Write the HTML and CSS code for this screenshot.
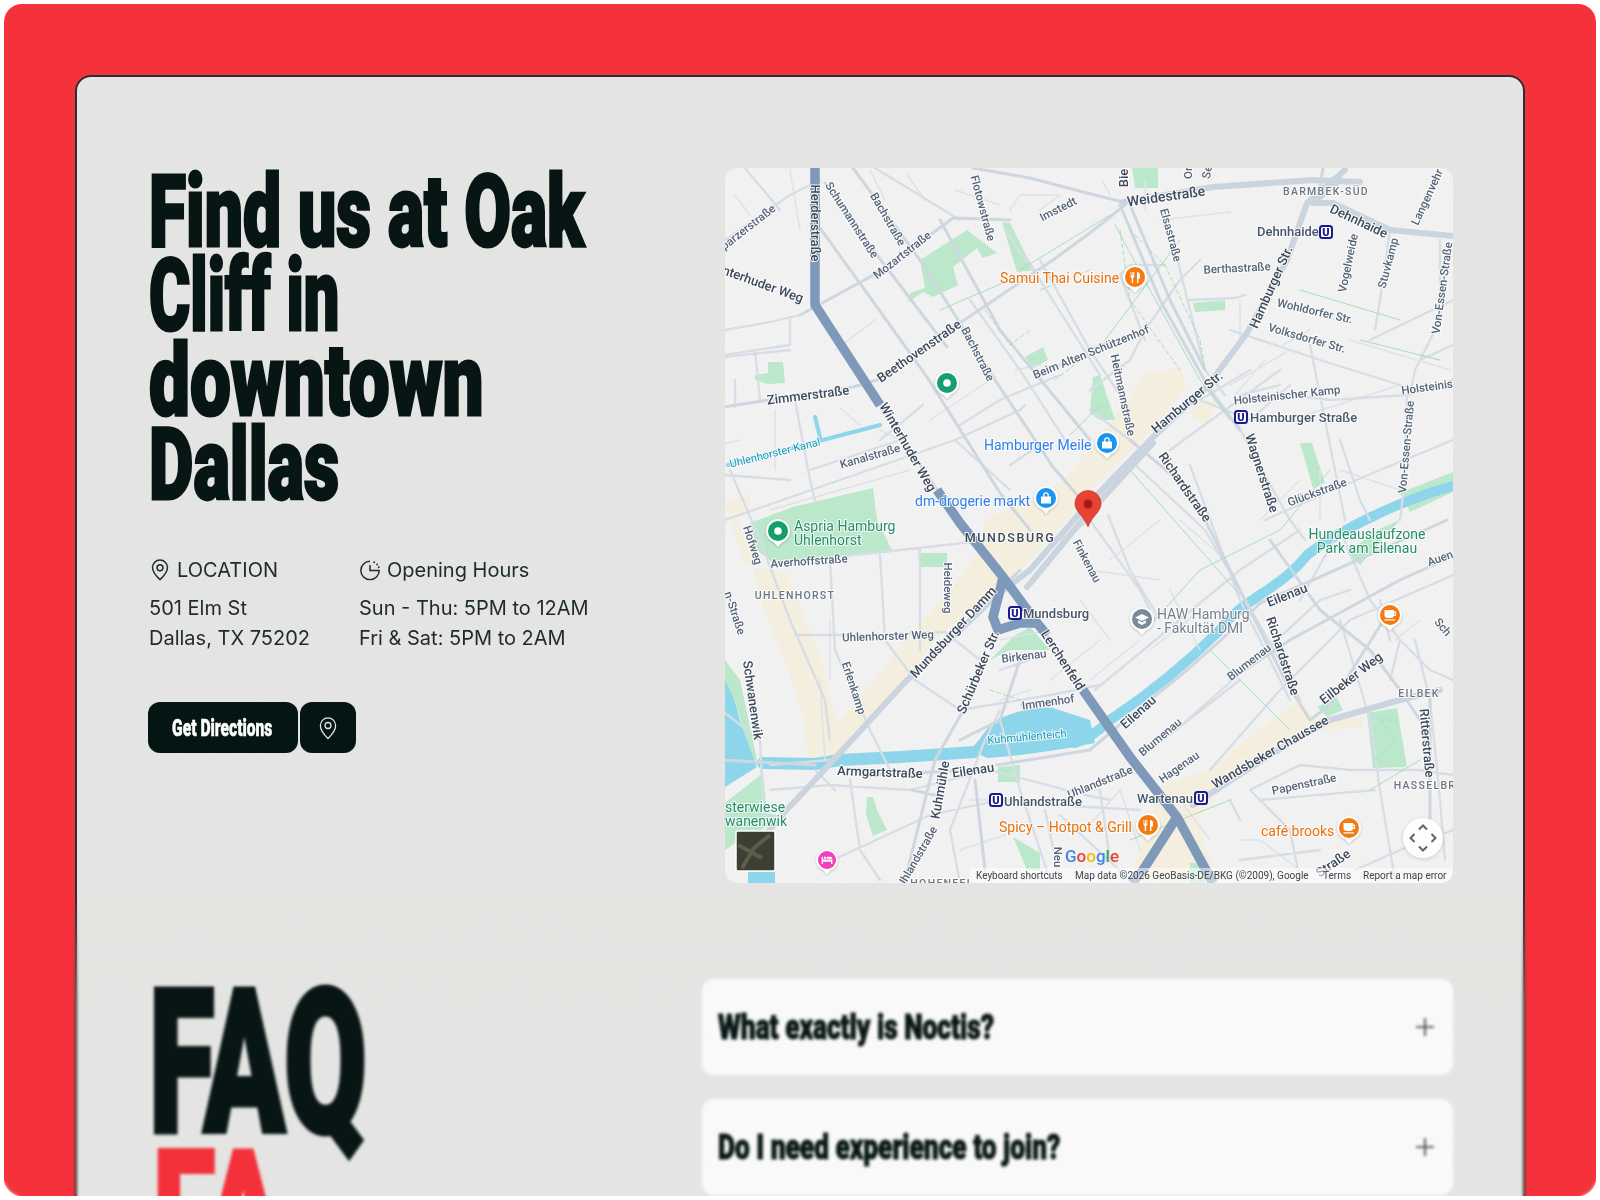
FILE: index.html
```html
<!DOCTYPE html>
<html lang="en">
<head>
  <meta charset="UTF-8" />
  <meta name="viewport" content="width=device-width, initial-scale=1.0" />
  <title>Noctis - Find us</title>
  <link rel="stylesheet" href="styles.css">
</head>
<body>
  <div class="frame">
    <main class="panel">
      <section class="hero">
        <div class="hero-info">
          <h1 class="hero-title">
            <span class="line-1">Find us at Oak</span>
            <span class="line-2">Cliff in</span>
            <span class="line-3">downtown</span>
            <span class="line-4">Dallas</span>
          </h1>
          <div class="info-row">
            <div class="info-col">
              <div class="info-label">
                <svg class="info-icon" viewBox="0 0 24 24"><path d="M12 22.5s8.2-7.4 8.2-13.2A8.2 8.2 0 0 0 3.800 9.300C3.800 15.100 12 22.500 12 22.500z"/><circle cx="12" cy="9.500" r="3.200"/></svg>
                LOCATION
              </div>
              <p>501 Elm St</p>
              <p>Dallas, TX 75202</p>
            </div>
            <div class="info-col">
              <div class="info-label">
                <svg class="info-icon" viewBox="0 0 24 24"><path d="M12 2.500A10 10 0 1 0 22 12.500H12V6.500"/><path d="M16.500 3.500l.01 0M19.700 6l.01 0M21.500 9l.01 0" stroke-linecap="round" stroke-width="2"/></svg>
                Opening Hours
              </div>
              <p>Sun - Thu: 5PM to 12AM</p>
              <p>Fri &amp; Sat: 5PM to 2AM</p>
            </div>
          </div>
          <div class="btn-row">
            <a class="btn btn-text" href="#"><span>Get Directions</span></a>
            <a class="btn btn-icon" href="#">
              <svg viewBox="0 0 24 24"><path d="M12 22.500s7.600-7.200 7.600-13A7.600 7.600 0 0 0 4.400 9.500c0 5.800 7.600 13 7.600 13z"/><circle cx="12" cy="9.500" r="3"/></svg>
            </a>
          </div>
        </div>

        <div class="map">
          <svg class="map-svg" viewBox="725 168 728 715">
            <defs>
              <g id="pin">
                <path class="pin-tail" d="M-7 8 L0 16 L7 8z"/>
                <circle class="pin-edge" r="12"/>
                <circle class="pin-fill" r="10"/>
              </g>
            </defs>
            <rect x="725" y="168" width="728" height="715" fill="#f3f3f4"/>

            <!-- beige districts -->
            <path class="beige" d="M985 520L1020 500 1050 495 1090 450 1147 373 1180 368 1187 387 1153 430 1090 490 1040 550 1000 590 970 610 935 640 950 590 980 550z"/>
            <path class="beige" d="M1193 403L1217 400 1208 425 1192 417z"/>
            <path class="beige" d="M985 570L955 610 920 660 880 710 840 760 810 770 807 750 835 725 875 680 905 640 950 590z"/>
            <path class="beige" d="M753 567L787 573 800 607 820 653 837 727 830 753 807 750 803 717 787 667 763 607z"/>
            <path class="beige" d="M725 503L750 493 750 510 737 520 757 565 745 565z"/>
            <path class="beige" d="M1130 883L1160 787 1213 767 1257 730 1300 700 1313 717 1363 717 1363 728 1313 730 1253 757 1213 800 1197 820 1217 883z"/>

            <!-- parks -->
            <path class="park" d="M920 260L967 230 997 253 983 258 977 248 953 267 958 285 933 297 923 292 908 302 910 293 925 288z"/>
            <path class="park" d="M1002 222L1010 223 1027 257 1035 270 1017 272z"/>
            <path class="park" d="M755 375L768 373 768 362 783 362 785 383 768 384 755 380z"/>
            <path class="park" d="M1025 357L1043 347 1048 360 1033 368z"/>
            <path class="park" d="M750 523L793 507 873 488 877 520 893 552 773 563 757 550z"/>
            <path class="park" d="M1132 168L1158 168 1158 188 1135 188z"/>
            <path class="park" d="M1193 303L1225 300 1225 310 1195 312z"/>
            <path class="park" d="M1300 443L1312 443 1325 483 1313 488z"/>
            <path class="park" d="M1090 413L1093 377 1100 375 1115 420 1100 420z"/>
            <path class="park" d="M918 553L947 553 947 567 920 567z"/>
            <path class="park" d="M990 660L1013 637 1030 627 1050 650 1010 650z"/>
            <path class="park" d="M725 660L740 680 757 760 750 760 737 707 725 680z"/>
            <path class="park" d="M725 803L763 773 767 813 787 817 740 840 725 850z"/>
            <path class="park" d="M867 797L873 797 877 810 887 830 873 836 866 815z"/>
            <path class="park" d="M998 767L1020 765 1020 782 998 782z"/>
            <path class="park" d="M1367 713L1397 708 1407 767 1373 768z"/>
            <path class="park" d="M1317 707L1337 698 1343 710 1327 717z"/>
            <path class="park" d="M1347 553L1377 530 1400 520 1360 565z"/>
            <path class="park" d="M1190 863L1205 863 1205 883 1190 883z"/>
            <path class="park" d="M1013 837L1040 853 1040 870 1027 870z"/>
            <path class="park" d="M1400 493L1453 472 1453 492 1410 512z"/>

            <!-- water -->
            <path class="water-line" stroke-width="10" d="M1453 486C1400 500 1340 530 1307 555 1280 590 1240 600 1220 630 1180 670 1140 700 1110 720 1095 735 1085 740 1075 743"/>
            <path class="water" d="M970 750C985 735 990 720 1003 717 1020 710 1040 706 1053 708L1090 720 1095 743C1060 750 1020 756 987 758z"/>
            <path class="water-line" stroke-width="12" d="M975 752L900 757 840 760 815 764 763 763"/>
            <path class="water" d="M725 680C735 700 738 710 740 722L757 767 725 787z"/>
            <path class="water" d="M748 872L775 872 775 883 748 883z"/>
            <path class="water-line" stroke-width="4" d="M728 465L880 425M815 417L820 437"/>

            <!-- thin paths -->
            <path class="road-thin" d="M800 230L790 170M735 195L750 215M870 170L885 200M907 175L925 200M955 190L1000 205M1010 210L1020 195 1060 195M1060 195L1040 210M875 320L835 350M1015 370L1040 365M775 410V470M740 440L720 445M770 510L910 470M930 420L990 380M840 408L860 425M880 430L900 440M1102 180L1110 195M1145 180V210M1160 220L1230 212M1240 300L1240 340M1265 360L1235 395M1230 385L1290 350M1283 345L1310 330M1350 340L1450 370M1320 470V520M1420 355L1440 360M1290 420L1400 385M1080 600L1110 640M1090 570L1160 580M1170 590L1200 650M1110 560L1160 520M1180 520L1220 555M1090 680L1140 640M1150 650L1200 610M820 680L825 760M830 620V680M1000 640L1050 630M1050 680L1100 640M1000 700L1030 690M1085 830L1120 790M1120 790L1140 850M970 800L1010 800M960 850L1020 830M1240 840H1260L1300 870M1060 790H1100M1180 800L1210 840M1395 640L1420 620M1260 520L1300 480M1340 470L1400 490"/>

            <!-- minor roads -->
            <path class="road-minor" d="M725 240L790 195 820 180M745 168L780 210M724 330L770 322 800 315M724 355L790 345 790 320M724 357L790 350M755 350L760 400M795 400L810 480 815 500M725 475L790 480M735 380V407M810 470L900 440M725 520L840 480 955 440 1020 410 1025 405M923 405L880 440M955 440L1010 490M870 165L960 220M1040 260L1090 350 1130 410M1005 230L1040 280 1100 375M970 300L1020 370 1065 440M1090 390L1130 360 1145 330M1040 375L1100 345 1145 330 1180 280 1200 260M1040 445L1010 465M1090 410L1130 440M1060 375L1000 400 960 425M1190 300L1235 298 1245 295M1175 250L1190 310 1205 370 1225 395M1230 330L1320 360 1400 385 1415 390M1390 230L1380 300 1375 330M1370 340L1453 300M1440 240L1440 320 1415 370 1410 395M1407 395L1405 480 1400 520M1165 265H1130L1120 275 1145 340M1285 395L1330 400 1407 395 1453 380M1240 395L1280 385M1235 420L1262 470 1290 520 1305 540M1265 520L1310 500 1380 470 1453 440M1340 440L1360 500 1370 520M1310 345L1325 420 1345 520M1190 465L1240 600 1290 700M1130 460L1205 530 1240 590 1285 670 1300 700M1090 520L1060 540M1090 520L1140 590 1155 620M1108 515L1130 570 1160 620M730 470L760 540 790 620 825 700 830 740M780 563L900 550 990 540M830 560L835 650 870 730 890 770M880 555L885 640 915 680 960 710M920 550L920 650M795 635L870 635 945 632 980 660M960 710L1050 695 1100 685M1000 710L985 740 950 830 960 883M1000 720L1020 790 1050 880M850 780L860 850 880 880M770 790L830 785 910 790 990 770 1085 795 1110 800M833 860L930 815 1000 800 1055 805 1140 810M1045 810L1060 880M1100 790L1110 860M1060 815L1130 880M1000 670L1030 660M1095 690L1240 570 1300 530M1170 735L1250 665 1320 600 1350 590M1210 770L1280 690 1350 620 1453 575M1150 750L1240 680M1300 600L1340 530 1370 600 1400 640 1430 670 1453 680M1380 600L1390 640M1340 620L1370 720 1380 790 1395 880M1250 790L1290 830 1300 880M1230 800L1240 820M1250 790L1300 765 1350 770 1420 770 1453 775M1260 800L1375 790M1415 640L1430 700 1440 800 1445 860M1390 680L1400 640M1240 860L1320 850M1355 870L1400 850 1453 830M725 713L760 740 763 800 770 830M770 765L830 760M815 770L835 790M1420 360L1453 345M1250 370L1200 400 1250 420 1290 385M1170 450L1280 370"/>

            <!-- medium roads -->
            <path class="road" d="M724 407L853 387 877 380 960 323 1053 260 1090 233 1125 205M973 168L1030 178 1087 193 1123 202M1323 168L1318 200M800 315L870 277 930 235 953 218 1010 220M820 228L877 307 927 377 1000 493 1030 530M853 168L920 260 960 323 997 383 1053 467 1090 510M825 183L877 255 947 347M940 220L1000 330 1090 440M1020 570L1000 590M1120 205L1160 300 1210 390 1240 430M1130 205L1170 300 1205 370M1130 440L1190 490 1245 600 1285 680 1310 720M1310 720L1330 705 1390 610M1270 540L1320 610 1370 650 1400 690 1420 720M1445 560L1400 580 1290 640 1230 680M1430 695L1430 840M860 775L980 770M720 760L815 765M975 690L935 760 905 880M912 790L935 795M975 780L985 870M1020 660L1000 720 960 740M997 765L1090 750 1117 727 1187 670 1247 617 1260 603 1313 580 1380 550 1447 520"/>

            <!-- arterial roads -->
            <path class="road-wide" d="M1345 170L1307 203 1287 260 1247 333 1207 387 1153 437 1087 505 1030 570 997 595 907 680 827 767 780 817 745 860"/>
            <path class="road-wide" stroke-width="4" d="M1153 443L1080 523 1027 587"/>
            <path class="road-wide" stroke-width="6" d="M1123 202L1213 187 1313 180 1360 182M1313 203L1333 203 1390 230 1453 236M1313 203L1340 180"/>
            <path class="road-wide" stroke-width="8" d="M1193 805L1270 755 1330 720 1400 700 1440 690"/>
            <path class="road-green" d="M1020 270L1110 215M1115 225L1150 290 1200 380 1230 420M1105 340L1150 280 1180 240M1130 470L1240 595M940 310L1010 280M1100 405L1070 435M1300 290L1400 320M1360 340L1440 360M1150 625L1200 570 1280 530 1330 470M1210 650L1290 730M1130 840L1230 800M1370 790L1420 760"/>
            <path class="road-dash" d="M985 310L1010 345 1030 330M1130 230L1165 265 1200 340 1205 370M1040 290L1090 270M1055 380L1100 345M1120 230L1130 300 1180 370M990 690L1020 700 1030 740M1380 720L1395 740 1375 760M1380 720H1400"/>

            <!-- dark highway -->
            <path class="road" d="M880 405L937 490M1047 635L1083 690"/>
            <path class="road-dark" d="M815 165V305L880 405M937 490L960 523 1003 577 1037 623 1047 635"/>
            <path class="road-dark" stroke-width="7" d="M1083 690L1130 757 1177 817 1213 883"/>
            <path class="road-dark" stroke-width="7" d="M1177 817L1143 870 1132 883"/>
            <path class="road-dark" stroke-width="5" d="M1003 577L1000 590 993 617 998 630 1020 623 1037 623"/>

            <!-- road labels -->
            <g class="lb">
              <text transform="translate(748 227) rotate(-38)">parzerstraße</text>
              <text class="lb-md" transform="translate(815 223) rotate(90)">Herderstraße</text>
              <text transform="translate(852 220) rotate(57)">Schumannstraße</text>
              <text transform="translate(888 219) rotate(60)">Bachstraße</text>
              <text transform="translate(902 255) rotate(-38)">Mozartstraße</text>
              <text transform="translate(983 208) rotate(75)">Flotowstraße</text>
              <text transform="translate(1058 209) rotate(-27)">Imstedt</text>
              <text class="lb-md" transform="translate(763 284) rotate(20)">nterhuder Weg</text>
              <text class="lb-md" transform="translate(919 351) rotate(-35)">Beethovenstraße</text>
              <text transform="translate(978 354) rotate(63)">Bachstraße</text>
              <text transform="translate(1091 352) rotate(-22)">Beim Alten Schützenhof</text>
              <text class="lb-md" transform="translate(808 395) rotate(-7)">Zimmerstraße</text>
              <text class="lb-md" transform="translate(908 447) rotate(60)">Winterhuder Weg</text>
              <text transform="translate(870 456) rotate(-16)">Kanalstraße</text>
              <text transform="translate(753 545) rotate(72)">Hofweg</text>
              <text transform="translate(809 561) rotate(-4)">Averhoffstraße</text>
              <text transform="translate(948 588) rotate(90)">Heideweg</text>
              <text transform="translate(735 613) rotate(72)">n-Straße</text>
              <text class="lb-md" transform="translate(753 700) rotate(82)">Schwanenwik</text>
              <text transform="translate(888 636) rotate(-2)">Uhlenhorster Weg</text>
              <text class="lb-md" transform="translate(953 632) rotate(-47)">Mundsburger Damm</text>
              <text transform="translate(854 688) rotate(72)">Erlenkamp</text>
              <text class="lb-md" transform="translate(978 672) rotate(-67)">Schürbeker Str.</text>
              <text transform="translate(1024 656) rotate(-7)">Birkenau</text>
              <text class="lb-md" transform="translate(1063 660) rotate(57)">Lerchenfeld</text>
              <text transform="translate(1048 702) rotate(-8)">Immenhof</text>
              <text class="lb-md" transform="translate(880 772) rotate(2)">Armgartstraße</text>
              <text class="lb-md" transform="translate(973 770) rotate(-8)">Eilenau</text>
              <text class="lb-md" transform="translate(940 790) rotate(-80)">Kuhmühle</text>
              <text transform="translate(1100 782) rotate(-22)">Uhlandstraße</text>
              <text transform="translate(917 857) rotate(-60)">Uhlandstraße</text>
              <text transform="translate(1058 857) rotate(90)">Neu</text>
              <text class="lb-md" transform="translate(1123 178) rotate(-90)">Bie</text>
              <text transform="translate(1188 173) rotate(-90)">Or</text>
              <text transform="translate(1207 172) rotate(-80)">Se</text>
              <text class="lb-lg" transform="translate(1166 196) rotate(-8)">Weidestraße</text>
              <text class="lb-md" transform="translate(1359 221) rotate(25)">Dehnhaide</text>
              <text transform="translate(1171 235) rotate(75)">Elsastraße</text>
              <text transform="translate(1348 263) rotate(-78)">Vogelweide</text>
              <text transform="translate(1427 197) rotate(-65)">Langenvehr</text>
              <text transform="translate(1388 263) rotate(-75)">Stuvkamp</text>
              <text transform="translate(1237 268) rotate(-3)">Berthastraße</text>
              <text class="lb-md" transform="translate(1271 287) rotate(-66)">Hamburger Str.</text>
              <text transform="translate(1442 288) rotate(-82)">Von-Essen-Straße</text>
              <text transform="translate(1315 311) rotate(13)">Wohldorfer Str.</text>
              <text transform="translate(1307 338) rotate(16)">Volksdorfer Str.</text>
              <text transform="translate(1123 395) rotate(78)">Heitmannstraße</text>
              <text class="lb-md" transform="translate(1187 402) rotate(-40)">Hamburger Str.</text>
              <text transform="translate(1287 395) rotate(-6)">Holsteinischer Kamp</text>
              <text transform="translate(1427 387) rotate(-8)">Holsteinis</text>
              <text transform="translate(1406 447) rotate(-85)">Von-Essen-Straße</text>
              <text class="lb-md" transform="translate(1262 473) rotate(72)">Wagnerstraße</text>
              <text class="lb-md" transform="translate(1185 487) rotate(55)">Richardstraße</text>
              <text transform="translate(1317 492) rotate(-20)">Glückstraße</text>
              <text transform="translate(1440 558) rotate(-20)">Auen</text>
              <text transform="translate(1087 561) rotate(62)">Finkenau</text>
              <text class="lb-md" transform="translate(1287 595) rotate(-22)">Eilenau</text>
              <text transform="translate(1443 627) rotate(50)">Sch</text>
              <text class="lb-md" transform="translate(1283 656) rotate(72)">Richardstraße</text>
              <text transform="translate(1249 662) rotate(-38)">Blumenau</text>
              <text transform="translate(1160 737) rotate(-40)">Blumenau</text>
              <text class="lb-md" transform="translate(1138 712) rotate(-42)">Eilenau</text>
              <text class="lb-md" transform="translate(1351 678) rotate(-38)">Eilbeker Weg</text>
              <text class="lb-md" transform="translate(1270 752) rotate(-30)">Wandsbeker Chaussee</text>
              <text transform="translate(1179 767) rotate(-35)">Hagenau</text>
              <text transform="translate(1304 784) rotate(-12)">Papenstraße</text>
              <text class="lb-md" transform="translate(1427 743) rotate(85)">Ritterstraße</text>
              <text class="lb-md" transform="translate(1333 863) rotate(-35)">Straße</text>
            </g>

            <!-- water labels -->
            <g class="lb-water">
              <text transform="translate(775 453) rotate(-14)">Uhlenhorster Kanal</text>
              <text transform="translate(1027 737) rotate(-5)">Kuhmühlenteich</text>
            </g>

            <!-- district labels -->
            <g class="lb-district">
              <text class="dark" x="1010" y="542">MUNDSBURG</text>
              <text x="795" y="599">UHLENHORST</text>
              <text x="1326" y="195">BARMBEK-SÜD</text>
              <text x="1419" y="697">EILBEK</text>
              <text x="1425" y="789">HASSELBR</text>
              <text x="942" y="887">HOHENFEL</text>
            </g>

            <!-- place labels -->
            <g class="lb-place">
              <text class="orange" x="1000" y="283">Samui Thai Cuisine</text>
              <text class="blue" x="984" y="450">Hamburger Meile</text>
              <text class="blue" x="915" y="506">dm-drogerie markt</text>
              <text class="green" x="794" y="531">Aspria Hamburg</text>
              <text class="green" x="794" y="545">Uhlenhorst</text>
              <text class="green" x="725" y="812">sterwiese</text>
              <text class="green" x="725" y="826">wanenwik</text>
              <text class="green mid" x="1367" y="539">Hundeauslaufzone</text>
              <text class="green mid" x="1367" y="553">Park am Eilenau</text>
              <text class="gray" x="1157" y="619">HAW Hamburg</text>
              <text class="gray" x="1157" y="633">- Fakultät DMI</text>
              <text class="orange" x="999" y="832">Spicy – Hotpot &amp; Grill</text>
              <text class="orange" x="1261" y="836">café brooks</text>
              <text class="station" x="1257" y="236">Dehnhaide</text>
              <text class="station" x="1250" y="422">Hamburger Straße</text>
              <text class="station" x="1023" y="618">Mundsburg</text>
              <text class="station" x="1004" y="806">Uhlandstraße</text>
              <text class="station" x="1137" y="803">Wartenau</text>
            </g>

            <!-- subway badges -->
            <g class="ubahn">
              <g transform="translate(1326 232)"><rect x="-6" y="-6" width="12" height="12" rx="2.500"/><text y="4">U</text></g>
              <g transform="translate(1241 417)"><rect x="-6" y="-6" width="12" height="12" rx="2.500"/><text y="4">U</text></g>
              <g transform="translate(1015 613)"><rect x="-6" y="-6" width="12" height="12" rx="2.500"/><text y="4">U</text></g>
              <g transform="translate(996 800)"><rect x="-6" y="-6" width="12" height="12" rx="2.500"/><text y="4">U</text></g>
              <g transform="translate(1201 798)"><rect x="-6" y="-6" width="12" height="12" rx="2.500"/><text y="4">U</text></g>
            </g>

            <!-- place pins -->
            <g class="pin pin-orange" transform="translate(1135 277)"><use href="#pin"/><path class="glyph" d="M-4.500 -5v4.500a1.500 1.500 0 0 0 1.200 1.400V6h1.400V.9a1.500 1.500 0 0 0 1.200-1.400V-5h-1v3.500h-.6V-5h-1v3.500h-.6V-5zM2 -5v11h1.400V1.500H5V-2.500C5 -4 3.500 -5 2 -5z"/></g>
            <g class="pin pin-blue" transform="translate(1107 443)"><use href="#pin"/><path class="glyph" d="M-5 -1.500h10V5.500h-10zM-2.800 -1.500v-1.500a2.800 2.800 0 0 1 5.600 0v1.500h-1.300v-1.500a1.500 1.500 0 0 0 -3 0v1.500z"/></g>
            <g class="pin pin-blue" transform="translate(1046 498)"><use href="#pin"/><path class="glyph" d="M-5 -1.500h10V5.500h-10zM-2.800 -1.500v-1.500a2.800 2.800 0 0 1 5.600 0v1.500h-1.300v-1.500a1.500 1.500 0 0 0 -3 0v1.500z"/></g>
            <g class="pin pin-green" transform="translate(947 383)"><use href="#pin"/><circle class="glyph" r="3.800"/></g>
            <g class="pin pin-green" transform="translate(778 531)"><use href="#pin"/><circle class="glyph" r="3.800"/></g>
            <g class="pin pin-gray" transform="translate(1142 619)"><use href="#pin"/><path class="glyph" d="M0 -5L7 -1.500 0 2 -7 -1.500zM-4 1.200L0 3.300 4 1.200V4L0 6 -4 4z"/></g>
            <g class="pin pin-orange" transform="translate(1390 615)"><use href="#pin"/><path class="glyph" d="M-5.500 -5H4V-3.500H6V1H4A3 3 0 0 1 1 3H-2.500A3 3 0 0 1 -5.500 0zM4 -2V-.5H5V-2zM-5.500 4.200H5V5.500H-5.500z"/></g>
            <g class="pin pin-orange" transform="translate(1349 828)"><use href="#pin"/><path class="glyph" d="M-5.500 -5H4V-3.500H6V1H4A3 3 0 0 1 1 3H-2.500A3 3 0 0 1 -5.500 0zM4 -2V-.5H5V-2zM-5.500 4.200H5V5.500H-5.500z"/></g>
            <g class="pin pin-orange" transform="translate(1148 825)"><use href="#pin"/><path class="glyph" d="M-4.500 -5v4.500a1.500 1.500 0 0 0 1.200 1.400V6h1.400V.9a1.500 1.500 0 0 0 1.200-1.400V-5h-1v3.500h-.6V-5h-1v3.500h-.6V-5zM2 -5v11h1.400V1.500H5V-2.500C5 -4 3.500 -5 2 -5z"/></g>
            <g class="pin pin-pink" transform="translate(827 860) scale(.9)"><use href="#pin"/><path class="glyph" d="M-6 -3.500H-4.500V-.5H6V4.500H4.500V2H-4.500V4.500H-6zM-3.500 -3.500H-.8V-1.500H-3.500zM0 -3.500H4A2 2 0 0 1 6 -1.500H0z"/></g>

            <!-- red marker -->
            <path d="M1088 527C1084 516 1075 512 1075 503.500A13 13 0 0 1 1101 503.500C1101 512 1092 516 1088 527z" fill="#ea4335" stroke="#c5221f" stroke-width=".6"/>
            <circle cx="1088" cy="504" r="4.500" fill="#a61b14"/>

            <!-- satellite thumbnail -->
            <rect class="sat" x="736" y="831" width="39" height="40" rx="2"/>
            <path d="M742 868L754 848 770 835M738 845L762 858" stroke="#6d6a55" stroke-width="4" fill="none" opacity=".7"/>
            <rect x="736" y="831" width="39" height="40" rx="2" fill="none" stroke="#fff" stroke-width="1.500"/>

            <!-- google attribution -->
            <rect x="970" y="868" width="483" height="15" fill="#fff" opacity=".55"/>
            <text class="google" x="1065" y="862"><tspan fill="#4285f4">G</tspan><tspan fill="#ea4335">o</tspan><tspan fill="#fbbc05">o</tspan><tspan fill="#4285f4">g</tspan><tspan fill="#34a853">l</tspan><tspan fill="#ea4335">e</tspan></text>
            <g class="attr">
              <text x="976" y="879">Keyboard shortcuts</text>
              <text x="1075" y="879">Map data ©2026 GeoBasis-DE/BKG (©2009), Google</text>
              <text x="1323" y="879">Terms</text>
              <text x="1363" y="879">Report a map error</text>
            </g>

            <!-- pan control -->
            <circle class="pan-bg" cx="1423" cy="838" r="20"/>
            <path class="pan-arrows" d="M1419 829.500L1423 825.500 1427 829.500M1419 846.500L1423 850.500 1427 846.500M1414.500 834L1410.500 838 1414.500 842M1431.500 834L1435.500 838 1431.500 842"/>
          </svg>
        </div>
      </section>

      <section class="faq">
        <div class="faq-head">
          <h2 class="faq-title">FAQ</h2>
          <div class="faq-accent">FA</div>
        </div>
        <div class="faq-list">
          <div class="faq-item">
            <span class="faq-q">What exactly is Noctis?</span>
            <svg class="plus" viewBox="0 0 18 18"><path d="M9 0V18M0 9H18"/></svg>
          </div>
          <div class="faq-item">
            <span class="faq-q">Do I need experience to join?</span>
            <svg class="plus" viewBox="0 0 18 18"><path d="M9 0V18M0 9H18"/></svg>
          </div>
        </div>
      </section>

      <svg class="grain" aria-hidden="true">
        <filter id="grain-noise">
          <feTurbulence type="fractalNoise" baseFrequency=".55" numOctaves="2" seed="4"/>
          <feColorMatrix type="saturate" values="0"/>
        </filter>
        <rect width="100%" height="100%" filter="url(#grain-noise)"/>
      </svg>
    </main>
    <div class="bottom-blur"></div>
  </div>
</body>
</html>
```

FILE: styles.css
```css
* {
  box-sizing: border-box;
}
body {
  margin: 0;
  background-color: #fff;
  font-family: Inter, "Liberation Sans", sans-serif;
  color: #1d2b2a;
}
.frame {
  position: relative;
  margin: 4px;
  height: 1192px;
  padding: 71px 71px 0;
  background-color: #f5313b;
  border-radius: 18px;
  overflow: hidden;
}
.panel {
  position: relative;
  height: 1300px;
  padding: 91px 70px 0 72px;
  background-color: #e6e6e4;
  border: 2px solid #2c2f30;
  border-radius: 16px;
  overflow: hidden;
}
.grain {
  position: absolute;
  top: 0;
  left: 0;
  width: 100%;
  height: 100%;
  opacity: .05;
  mix-blend-mode: multiply;
  pointer-events: none;
}

/* hero */
.hero {
  display: grid;
  grid-template-columns: 576px 728px;
}
.hero-title {
  margin: 2px 0 0;
  font-family: Roboto, sans-serif;
  font-weight: 900;
  font-size: 100px;
  line-height: 84.3px;
  color: #071614;
  -webkit-text-stroke: 3px #071614;
}
.hero-title span {
  display: block;
  white-space: nowrap;
  transform-origin: left center;
}
.hero-title .line-1 { transform: scaleX(.678); }
.hero-title .line-2 { transform: scaleX(.63); }
.hero-title .line-3 { transform: scaleX(.728); }
.hero-title .line-4 { transform: scaleX(.686); }
.info-row {
  display: flex;
  margin-top: 48px;
}
.info-col {
  flex: none;
  width: 210px;
  font-size: 20px;
  line-height: 30px;
  white-space: nowrap;
}
.info-col p {
  margin: 0;
}
.info-label {
  display: flex;
  align-items: center;
  gap: 6px;
  margin-bottom: 8px;
}
.info-icon {
  width: 22px;
  height: 22px;
  fill: none;
  stroke: #1d2b2a;
  stroke-width: 1.6;
}
.btn-row {
  display: flex;
  gap: 2px;
  margin: 49px 0 0 -1px;
}
.btn {
  display: flex;
  align-items: center;
  height: 51px;
  background-color: #051513;
  border-radius: 12px;
  color: #fff;
  text-decoration: none;
}
.btn-text {
  width: 150px;
  padding-left: 24px;
  font-family: Roboto, sans-serif;
  font-weight: 900;
  font-size: 24px;
  -webkit-text-stroke: .5px #fff;
}
.btn-text span {
  white-space: nowrap;
  transform-origin: left center;
  transform: scaleX(.65);
}
.btn-icon {
  width: 56px;
  justify-content: center;
}
.btn-icon svg {
  width: 24px;
  height: 24px;
  fill: none;
  stroke: #e4e6e5;
  stroke-width: 1.3;
}

/* map */
.map {
  height: 715px;
  border-radius: 12px;
  overflow: hidden;
}
.map-svg {
  display: block;
  width: 100%;
  height: 100%;
}
.beige { fill: #f6f0e0; }
.park { fill: #bde9cd; }
.water { fill: #8ed7ec; }
.water-line {
  fill: none;
  stroke: #8ed7ec;
  stroke-linecap: round;
}
.road-thin, .road-minor, .road, .road-wide, .road-dark, .road-green, .road-dash {
  fill: none;
  stroke-linecap: round;
  stroke-linejoin: round;
}
.road-thin { stroke: #e0e4e8; stroke-width: 1.5; }
.road-minor { stroke: #d8dfe6; stroke-width: 2.3; }
.road { stroke: #d0d9e1; stroke-width: 3; }
.road-wide { stroke: #ccd6e0; stroke-width: 6; }
.road-dark { stroke: #7f9abb; stroke-width: 9.5; stroke-linecap: butt; }
.road-green { stroke: #a9dfc0; stroke-width: 1; }
.road-dash { stroke: #a9dfc0; stroke-width: 1; stroke-dasharray: 4 3; }

.lb text, .lb-water text, .lb-district text, .lb-place text {
  font-family: Roboto, sans-serif;
  paint-order: stroke;
  stroke: rgba(255, 255, 255, .85);
  stroke-width: 2px;
}
.lb text {
  font-size: 11.5px;
  font-weight: 500;
  fill: #55647a;
  text-anchor: middle;
  dominant-baseline: central;
}
.lb .lb-md {
  font-size: 13px;
  fill: #3d4a5c;
}
.lb .lb-lg {
  font-size: 14px;
  fill: #3d4a5c;
}
.lb-water text {
  font-size: 11px;
  fill: #159ab5;
  text-anchor: middle;
  dominant-baseline: central;
}
.lb-district text {
  font-size: 10.5px;
  font-weight: 500;
  letter-spacing: 1.3px;
  fill: #6b7684;
  text-anchor: middle;
}
.lb-district .dark {
  font-size: 12.5px;
  fill: #3d4a5c;
  letter-spacing: 1.6px;
}
.lb-place text {
  font-size: 14px;
}
.lb-place .orange { fill: #e8710a; }
.lb-place .blue { fill: #2f80ed; }
.lb-place .green { fill: #23906a; }
.lb-place .gray { fill: #75828f; }
.lb-place .station {
  font-size: 13px;
  font-weight: 500;
  fill: #47566a;
}
.lb-place .mid { text-anchor: middle; }

.ubahn rect {
  fill: #fff;
  stroke: #1a1a8c;
  stroke-width: 2;
}
.ubahn text {
  font-family: Roboto, sans-serif;
  font-size: 11px;
  font-weight: 900;
  fill: #1a1a8c;
  text-anchor: middle;
}
.pin-tail, .pin-edge { fill: #fff; }
.pin-orange { color: #f57c12; }
.pin-blue { color: #1a96f0; }
.pin-green { color: #14a06f; }
.pin-gray { color: #7a8b9a; }
.pin-pink { color: #f53ebd; }
.pin-fill { fill: currentColor; }
.glyph { fill: #fff; }
.pin use { filter: drop-shadow(0 1px 1px rgba(0, 0, 0, .2)); }

.sat { fill: #3e3f33; }
.google {
  font-family: Roboto, sans-serif;
  font-size: 17px;
  font-weight: 500;
}
.attr text {
  font-family: Roboto, sans-serif;
  font-size: 10px;
  fill: #3f444a;
}
.pan-bg {
  fill: #fff;
  filter: drop-shadow(0 1px 2px rgba(0, 0, 0, .15));
}
.pan-arrows {
  fill: none;
  stroke: #666;
  stroke-width: 2;
}

/* faq */
.faq {
  display: grid;
  grid-template-columns: 553px 751px;
  margin-top: 96px;
}
.faq-title, .faq-accent {
  font-family: Roboto, sans-serif;
  font-weight: 900;
  white-space: nowrap;
  transform-origin: left center;
}
.faq-title {
  margin: 0;
  font-size: 200px;
  line-height: 170px;
  color: #071614;
  -webkit-text-stroke: 5px #071614;
  transform: scaleX(.6);
}
.faq-accent {
  margin-left: 4px;
  font-size: 165px;
  line-height: 126px;
  color: #f5313b;
  -webkit-text-stroke: 4px #f5313b;
  transform: scaleX(.69);
}
.faq-list {
  display: flex;
  flex-direction: column;
  gap: 24px;
}
.faq-item {
  display: flex;
  justify-content: space-between;
  align-items: center;
  height: 96px;
  padding: 0 19px 0 16px;
  background-color: #fbfbfb;
  border-radius: 12px;
}
.faq-q {
  font-family: Roboto, sans-serif;
  font-weight: 900;
  font-size: 35px;
  white-space: nowrap;
  color: #071614;
  -webkit-text-stroke: 1px #071614;
  transform-origin: left center;
  transform: scaleX(.75);
}
.plus {
  flex: none;
  width: 18px;
  height: 18px;
  fill: none;
  stroke: #333;
  stroke-width: 1.6;
}
.bottom-blur {
  position: absolute;
  left: 0;
  right: 0;
  bottom: 0;
  height: 300px;
  backdrop-filter: blur(1.6px);
  -webkit-mask-image: linear-gradient(to top, #000 65%, transparent);
  mask-image: linear-gradient(to top, #000 65%, transparent);
  pointer-events: none;
}
```
